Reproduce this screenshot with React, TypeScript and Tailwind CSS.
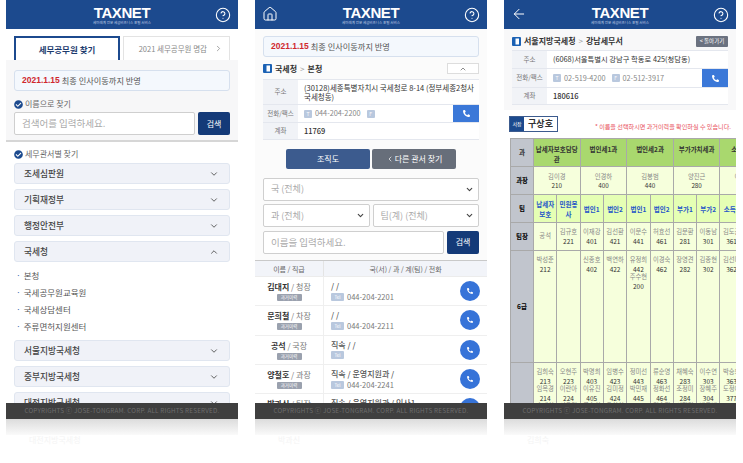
import React from "react";
import { ArrowLeft, ChevronDown, ChevronLeft, ChevronRight, ChevronUp, CircleHelp, House } from "lucide-react";
import { FaCheckCircle, FaPhoneAlt } from "react-icons/fa";

const font = "font-['Noto_Sans_CJK_KR','Noto_Sans',sans-serif]";

const Header = ({ left }: { left?: React.ReactNode }) => (
  <header className="relative h-[29px] shrink-0 bg-[#1c4a8e] flex items-center justify-center">
    <div className="absolute left-[7px] top-[6px] text-white">{left}</div>
    <div className="flex flex-col items-center pt-[1px]">
      <span className="font-['Liberation_Sans',sans-serif] font-bold text-[15px] leading-[15px] text-white tracking-[-0.4px]">
        TAXNET
      </span>
      <span className="text-[3.5px] leading-[5px] text-[#c5d3e8]">세미래계 전문 세금비즈니스 포털 서비스</span>
    </div>
    <CircleHelp className="absolute right-[7px] top-[7px] text-white" size={16} strokeWidth={1.6} />
  </header>
);

const Notice = () => (
  <div className="h-[21px] rounded-[3px] border border-[#d6e0ee] bg-[#f4f8fd] px-[7px] flex items-center text-[8.2px] text-[#555]">
    <b className="text-[#d0282e] mr-[2px] text-[8.5px] font-['Liberation_Sans',sans-serif]">2021.1.15</b> 최종 인사이동까지 반영
  </div>
);

const SearchRow = ({ placeholder }: { placeholder: string }) => (
  <div className="flex gap-[3px] h-[23px]">
    <div className="flex-1 rounded-[2px] border border-[#cfcfcf] bg-white px-[7px] flex items-center text-[9.5px] text-[#aaa]">
      {placeholder}
    </div>
    <button className="w-[32px] rounded-[2px] bg-[#143a78] text-[8px] text-white">검색</button>
  </div>
);

const Label = ({ text }: { text: string }) => (
  <div className="flex items-center gap-[2px] text-[8px] leading-[12px] text-[#666]">
    <FaCheckCircle className="text-[#1c4a8e]" size={9} />
    {text}
  </div>
);

const Accordion = ({ text, open }: { text: string; open?: boolean }) => (
  <div className="h-[21px] shrink-0 rounded-[3px] border border-[#e0e6f0] bg-[#f0f2f8] pl-[9px] pr-[10px] flex items-center justify-between text-[8.7px] font-medium text-[#444]">
    {text}
    {open ? <ChevronUp size={10} /> : <ChevronDown size={10} />}
  </div>
);

const Footer = ({ ghost }: { ghost: string }) => (
  <>
    <footer className="h-[16px] shrink-0 bg-[#3f3f3f] flex items-center justify-center text-[6.3px] tracking-[0.2px] text-[#6e6e6e]">
      COPYRIGHTS ⓒ JOSE-TONGRAM. CORP. ALL RIGHTS RESERVED.
    </footer>
    <div className="h-[16px] shrink-0 bg-gradient-to-b from-[#dcdcdc] to-[#fafafa]" />
    <div className="pl-[23px] text-[8px] leading-[10px] text-[#f4f4f4]">{ghost}</div>
  </>
);

const Book = () => (
  <svg width="9" height="9" viewBox="0 0 9 9" className="shrink-0">
    <rect width="9" height="9" rx="1" fill="#1c62b4" />
    <rect x="3.5" y="1.5" width="3.5" height="6" fill="#fff" />
  </svg>
);

const InfoRow = ({ label, h, children }: { label: string; h: string; children: React.ReactNode }) => (
  <div className={`flex border-b border-[#e4e7ee] ${h}`}>
    <div className="w-[35px] shrink-0 bg-[#f1f3f7] flex items-center justify-center text-[6.5px] text-[#777]">{label}</div>
    <div className="flex-1 bg-white flex items-center">{children}</div>
  </div>
);

const Chip = ({ t }: { t: string }) => (
  <span className="w-[8px] h-[8px] mr-[3px] rounded-[1px] bg-[#b9c8de] text-[5px] leading-[8px] text-center text-white">{t}</span>
);

const CallButton = () => (
  <div className="ml-auto w-[26px] self-stretch bg-[#3b78d8] flex items-center justify-center text-white">
    <FaPhoneAlt size={7} />
  </div>
);

const Select = ({ text, className }: { text: string; className?: string }) => (
  <div className={`h-[23px] rounded-[2px] border border-[#cfcfcf] bg-white pl-[7px] flex items-center justify-between text-[9px] text-[#aaa] ${className ?? ""}`}>
    {text}
    <span className="h-full w-[17px] flex items-center justify-center text-[#444]">
      <ChevronDown size={9} strokeWidth={3} />
    </span>
  </div>
);

const people = [
  { name: "김대지", rank: "청장", org: "/ /", tel: "044-204-2201" },
  { name: "문희철", rank: "차장", org: "/ /", tel: "044-204-2211" },
  { name: "공석", rank: "국장", org: "직속 / /", tel: "" },
  { name: "양철호", rank: "과장", org: "직속 / 운영지원과 /", tel: "044-204-2241" },
  { name: "박과신", rank: "팀장", org: "직속 / 운영지원과 / 인사1", tel: "" },
];

const PersonRow = ({ p }: { p: (typeof people)[number] }) => (
  <div className="flex h-[29.3px] shrink-0 border-b border-[#efefef] bg-white">
    <div className="w-[69px] shrink-0 border-r border-[#efefef] flex flex-col items-center justify-center">
      <div className="text-[8px] leading-[12px] text-[#777]">
        <b className="text-[#333]">{p.name}</b> / {p.rank}
      </div>
      <span className="mt-[1px] w-[25px] h-[7px] rounded-[1px] bg-[#9aa1ae] text-[4.5px] leading-[7px] text-center text-white">과거이력</span>
    </div>
    <div className="flex-1 pl-[7px] flex flex-col justify-center text-[8px] leading-[11px] text-[#555]">
      <span className="font-medium">{p.org}</span>
      <div className="flex items-center gap-[3px] h-[11px] text-[7.5px] text-[#777]">
        <span className="w-[13px] h-[8px] rounded-[1px] bg-[#b9c8de] text-[4.5px] leading-[8px] text-center text-white">Tel</span>
        {p.tel}
      </div>
    </div>
    <div className="w-[27px] shrink-0 flex items-center">
      <span className="w-[20px] h-[20px] rounded-full bg-[#3673d8] flex items-center justify-center text-white">
        <FaPhoneAlt size={6} />
      </span>
    </div>
  </div>
);

const th = "border border-[#a9a9a9] font-bold";
const Cell = ({ lines, top }: { lines: string[]; top?: boolean }) => (
  <td className={`border border-[#a9a9a9] bg-[#f6ffdc] text-center leading-[8.5px] text-[6.3px] px-0 py-[5px] ${top ? "align-top" : ""}`}>
    {lines.map((l, i) => (
      <div key={i} className={i % 2 ? "text-[#333] text-[6.5px]" : "text-[#888]"}>{l}</div>
    ))}
  </td>
);

const rows = {
  heads: [["공석"], ["김규호", "221"], ["이재강", "401"], ["김선환", "421"], ["이문수", "441"], ["허효선", "461"], ["김문환", "281"], ["이동남", "301"], ["김도곤", "361"], []],
  sixth: [["박성준", "212"], [], ["신종호", "402"], ["백연하", "422"], ["유정희", "442", "주수현", "200"], ["이경숙", "462"], ["장영견", "282"], ["김종현", "302"], ["김선미", "362"], []],
  seventh: [["김희숙", "213", "임옥경", "214", "송재희", "215"], ["오현주", "223", "이란아", "224", "서유경", "225"], ["박명희", "403", "이유진", "405", "류승희", "406"], ["임병수", "423", "김미정", "424", "유창희", "425"], ["정미선", "443", "박민재", "445"], ["류순영", "463", "정화선", "464", "김승진", "465"], ["채혜숙", "283", "조정미", "284", "서정미", "285"], ["이수연", "303", "장혜주", "304", "박근비", "305"], ["박승희", "363", "도정아", "377"], []],
};

const OrgTable = () => (
  <div className="overflow-hidden pl-[6px]">
    <table className="table-fixed border-collapse w-[256px] border border-[#a9a9a9]">
      <colgroup>
        <col className="w-[23px]" />
        {rows.heads.map((_, i) => (
          <col key={i} className="w-[23.3px]" />
        ))}
      </colgroup>
      <tbody>
        <tr className="h-[28px] text-[6.5px] text-[#333]">
          <td className={`${th} bg-[#c1c5cd] text-center`}>과</td>
          {["납세자보호담당관", "법인세1과", "법인세2과", "부가가치세과", "소득세과"].map((t) => (
            <td key={t} colSpan={2} className={`${th} bg-[#a9d86e] text-center align-top pt-[5px] leading-[10px] px-0 break-all`}>{t}</td>
          ))}
        </tr>
        <tr className="h-[28px] text-[6.3px]">
          <td className={`${th} bg-[#c1c5cd] text-center`}>과장</td>
          {[["김이경", "210"], ["인경하", "400"], ["김봉범", "440"], ["양진근", "280"], ["이은주", "360"]].map((l) => (
            <td key={l[0]} colSpan={2} className="border border-[#a9a9a9] bg-[#f6ffdc] text-center leading-[9px]">
              <div className="text-[#888]">{l[0]}</div>
              <div className="text-[#333]">{l[1]}</div>
            </td>
          ))}
        </tr>
        <tr className="h-[28px] text-[6.5px]">
          <td className={`${th} bg-[#c1c5cd] text-center`}>팀</td>
          {["납세자보호", "민원봉사", "법인1", "법인2", "법인1", "법인2", "부가1", "부가2", "소득1", "소득2"].map((t, i) => (
            <td key={i} className="border border-[#a9a9a9] bg-[#e5ffb4] text-center font-bold text-[#1f55c8] leading-[10px] px-[2px] break-all">{t}</td>
          ))}
        </tr>
        <tr className="h-[28px] text-[6.5px]">
          <td className={`${th} bg-[#c1c5cd] text-center`}>팀장</td>
          {rows.heads.map((l, i) => <Cell key={i} lines={l} />)}
        </tr>
        <tr className="h-[112px] text-[6.5px]">
          <td className={`${th} bg-[#c1c5cd] text-center`}>6급</td>
          {rows.sixth.map((l, i) => <Cell key={i} lines={l} top />)}
        </tr>
        <tr className="h-[60px] text-[6.5px]">
          <td className={`${th} bg-[#c1c5cd] text-center`} />
          {rows.seventh.map((l, i) => <Cell key={i} lines={l} top />)}
        </tr>
      </tbody>
    </table>
  </div>
);

const Phone = ({ children, ghost }: { children: React.ReactNode; ghost: string }) => (
  <div className="w-[232px] shrink-0 flex flex-col">
    <div className="h-[403px] overflow-hidden flex flex-col bg-white">{children}</div>
    <Footer ghost={ghost} />
  </div>
);

export default function App() {
  return (
    <div className={`w-[743px] h-[463px] overflow-hidden bg-white flex gap-[17px] pl-[6px] ${font}`}>
      {/* search home */}
      <Phone ghost="대전지방국세청">
        <Header />
        <div className="flex gap-[3px] px-[8px] pt-[7px] h-[31px] shrink-0">
          <div className="w-[106px] h-[24px] border-2 border-b-0 border-[#1c4a8e] flex items-center justify-center text-[8.5px] font-bold text-[#1c3b6e]">
            세무공무원 찾기
          </div>
          <div className="w-[107px] h-[24px] border border-b-0 border-[#e3e3e3] flex items-center justify-end gap-[7px] pr-[6px] text-[7.5px] text-[#888]">
            2021 세무공무원 명감 <ChevronRight size={9} />
          </div>
        </div>
        <section className="bg-[#f7f7f8] border-b-2 border-[#d6d6d6] px-[8px] pt-[10px] h-[82px] shrink-0">
          <Notice />
          <div className="mt-[7px] mb-[2px]"><Label text="이름으로 찾기" /></div>
          <SearchRow placeholder="검색어를 입력하세요." />
        </section>
        <div className="px-[8px] pt-[6px] flex flex-col">
          <div className="mb-[3px]"><Label text="세무관서별 찾기" /></div>
          <div className="flex flex-col gap-[5px]">
            <Accordion text="조세심판원" />
            <Accordion text="기획재정부" />
            <Accordion text="행정안전부" />
            <Accordion text="국세청" open />
          </div>
          <ul className="pl-[2px] py-[5px] text-[8.5px] leading-[17px] text-[#555]">
            {["본청", "국세공무원교육원", "국세상담센터", "주류면허지원센터"].map((t) => (
              <li key={t} className="flex gap-[3px]"><span className="text-[#3b6db0]">·</span>{t}</li>
            ))}
          </ul>
          <div className="flex flex-col gap-[5px]">
            <Accordion text="서울지방국세청" />
            <Accordion text="중부지방국세청" />
            <Accordion text="대전지방국세청" />
          </div>
        </div>
      </Phone>

      {/* office detail */}
      <Phone ghost="박과신">
        <Header left={<House size={16} strokeWidth={1.5} />} />
        <section className="bg-[#fbfbfb] px-[8px] pt-[7px] h-[232px] shrink-0 border-b border-[#c9c9c9]">
          <Notice />
          <div className="flex items-center gap-[3px] h-[21px] mt-[1px] text-[8px] font-bold text-[#333]">
            <Book />
            국세청 <span className="font-normal text-[#999]">&gt;</span> 본청
            <span className="ml-auto w-[32px] h-[11px] border border-[#ddd] bg-white flex items-center justify-center text-[#555]">
              <ChevronUp size={8} />
            </span>
          </div>
          <div className="border-t border-[#e4e7ee]">
            <InfoRow label="주소" h="h-[25px]">
              <p className="pl-[6px] text-[7.5px] leading-[9.5px] text-[#333] whitespace-nowrap">
                (30128)세종특별자치시 국세청로 8-14 (정부세종2청사<br />국세청동)
              </p>
            </InfoRow>
            <InfoRow label="전화/팩스" h="h-[18px]">
              <div className="pl-[6px] flex items-center text-[7.3px] text-[#888]"><Chip t="T" /><span className="mr-[6px]">044-204-2200</span><Chip t="F" /></div>
              <CallButton />
            </InfoRow>
            <InfoRow label="계좌" h="h-[17px]">
              <span className="pl-[6px] text-[7.5px] font-medium text-[#333]">11769</span>
            </InfoRow>
          </div>
          <div className="flex justify-center gap-[2px] mt-[9px]">
            <button className="w-[84px] h-[20px] rounded-[2px] bg-[#3c5b8e] text-[8px] text-white">조직도</button>
            <button className="w-[84px] h-[20px] rounded-[2px] bg-[#676e7a] text-[8px] text-white flex items-center justify-center gap-[1px]"><ChevronLeft size={8} />다른 관서 찾기</button>
          </div>
          <div className="flex flex-col gap-[3.5px] mt-[8.5px]">
            <Select text="국 (전체)" />
            <div className="flex gap-[3px]">
              <Select text="과 (전체)" className="flex-1" />
              <Select text="팀(계) (전체)" className="flex-1" />
            </div>
            <SearchRow placeholder="이름을 입력하세요." />
          </div>
        </section>
        <div className="flex h-[16px] shrink-0 bg-[#f2f4f9] text-[7px] text-[#666] border-b border-[#ececec]">
          <div className="w-[69px] border-r border-[#e4e4e4] text-center leading-[16px]">이름 / 직급</div>
          <div className="flex-1 text-center leading-[16px]">국(서) / 과 / 계(팀) / 전화</div>
        </div>
        {people.map((p) => <PersonRow key={p.name} p={p} />)}
      </Phone>

      {/* seating chart */}
      <Phone ghost="김희숙">
        <Header left={<ArrowLeft size={16} strokeWidth={1.5} />} />
        <section className="bg-[#f8f8f9] px-[8px] h-[81px] shrink-0">
          <div className="flex items-center gap-[3px] h-[21px] pt-[3px] text-[8px] font-bold text-[#333]">
            <Book />
            서울지방국세청 <span className="font-normal text-[#999]">&gt;</span> 강남세무서
            <span className="ml-auto w-[32px] h-[11px] rounded-[1px] bg-[#6b7280] text-[5.5px] font-normal text-white flex items-center justify-center">&lt; 돌아가기</span>
          </div>
          <div className="border-t border-[#e4e7ee]">
            <InfoRow label="주소" h="h-[18px]">
              <span className="pl-[6px] text-[7.3px] text-[#333]">(6068)서울특별시 강남구 학동로 425(청담동)</span>
            </InfoRow>
            <InfoRow label="전화/팩스" h="h-[19px]">
              <div className="pl-[6px] flex items-center text-[7.3px] text-[#888]"><Chip t="T" /><span className="mr-[6px]">02-519-4200</span><Chip t="F" />02-512-3917</div>
              <CallButton />
            </InfoRow>
            <InfoRow label="계좌" h="h-[17px]">
              <span className="pl-[6px] text-[7.5px] font-medium text-[#333]">180616</span>
            </InfoRow>
          </div>
        </section>
        <div className="flex items-center h-[28px] pl-[5px] pr-[5px] pb-[1px] shrink-0">
          <div className="flex h-[16px] border border-[#3c5b8e]">
            <span className="w-[14px] bg-[#1c4a8e] text-[5px] leading-[14px] text-center text-white">서장</span>
            <span className="w-[33px] text-[9px] leading-[14px] text-center font-bold text-[#333]">구상호</span>
          </div>
          <span className="ml-auto pt-[6px] text-[6.1px] text-[#e8505b] whitespace-nowrap">* 이름을 선택하시면 과거이력을 확인하실 수 있습니다.</span>
        </div>
        <OrgTable />
      </Phone>
    </div>
  );
}
